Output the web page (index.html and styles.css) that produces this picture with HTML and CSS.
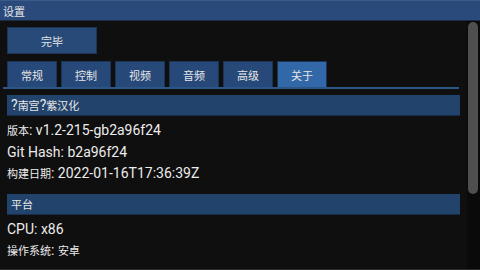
FILE: index.html
```html
<!DOCTYPE html>
<html lang="zh">

<head>
  <meta charset="UTF-8" />
  <meta name="viewport" content="width=device-width, initial-scale=1.0" />
  <title>设置</title>
  <link rel="stylesheet" href="styles.css">
</head>

<body>
  <div class="window">

    <div class="title-bar"><span class="cjk">设置</span></div>

    <div class="main">
      <div class="content">
        <button class="done-button"><span class="cjk">完毕</span></button>

        <div class="tab-bar">
          <button class="tab"><span class="cjk">常规</span></button>
          <button class="tab"><span class="cjk">控制</span></button>
          <button class="tab"><span class="cjk">视频</span></button>
          <button class="tab"><span class="cjk">音频</span></button>
          <button class="tab"><span class="cjk">高级</span></button>
          <button class="tab tab-active"><span class="cjk">关于</span></button>
        </div>

        <div class="section-header">?<span class="cjk">南宫</span>?<span class="cjk">紫汉化</span></div>
        <p class="line"><span class="cjk">版本</span>: v1.2-215-gb2a96f24</p>
        <p class="line">Git Hash: b2a96f24</p>
        <p class="line"><span class="cjk">构建日期</span>: 2022-01-16T17:36:39Z</p>

        <div class="section-header section-gap"><span class="cjk">平台</span></div>
        <p class="line">CPU: x86</p>
        <p class="line"><span class="cjk">操作系统</span>: <span class="cjk">安卓</span></p>
      </div>

      <div class="scrollbar">
        <div class="scroll-thumb"></div>
      </div>
    </div>

  </div>
</body>

</html>
```

FILE: styles.css
```css
/* Base Reset */
* {
  margin: 0;
  padding: 0;
  box-sizing: border-box;
}

body {
  background-color: #0f0f0f;
  width: 480px;
  height: 270px;
  overflow: hidden;
  font-family: Roboto, 'Noto Sans CJK SC', sans-serif;
  color: #ececec;
}

.cjk {
  font-family: 'Noto Sans CJK SC', sans-serif;
  font-size: 11px;
}

/* Window */
.window {
  display: flex;
  flex-direction: column;
  height: 270px;
  border-bottom: 1px solid #2a2a2a;
}

.title-bar {
  height: 21px;
  background-color: #2a4a7b;
  border-top: 1px solid #3a5a88;
  border-bottom: 1px solid #1b2b42;
  padding-left: 3px;
  display: flex;
  align-items: center;
  color: #e4e4e4;
}

.main {
  flex: 1;
  display: flex;
}

.content {
  flex: 1;
  padding: 6px 6px 0 7px;
}

/* Buttons */
.done-button {
  width: 90px;
  height: 27px;
  background-color: #284a78;
  border: 1px solid #1b3354;
  color: #e6e6e6;
  display: flex;
  align-items: center;
  justify-content: center;
}

.tab-bar {
  display: flex;
  gap: 4px;
  margin: 7px 2px 0 -4px;
  padding-left: 4px;
  border-bottom: 2px solid #2c5588;
}

.tab {
  width: 50px;
  height: 26px;
  background-color: #27497a;
  border: 1px solid #1b3354;
  border-bottom: none;
  color: #e6e6e6;
  display: flex;
  align-items: center;
  justify-content: center;
}

.tab-active {
  background-color: #3268a8;
}

/* Sections */
.section-header {
  margin-top: 6px;
  height: 21px;
  width: 453px;
  background-color: #22436c;
  border-bottom: 1px solid #182c47;
  padding-left: 4px;
  line-height: 20px;
  font-size: 14px;
  color: #e8e8e8;
}

.section-gap {
  margin-top: 9px;
}

.line {
  height: 21.5px;
  line-height: 21.5px;
  font-size: 14px;
}

.section-header + .line {
  margin-top: 4px;
}

/* Scrollbar */
.scrollbar {
  width: 13px;
  background-color: #0a0a0a;
  padding: 1px 2px 0 1px;
}

.scroll-thumb {
  height: 172px;
  background-color: #4f4f4f;
  border-radius: 5px;
}
```
